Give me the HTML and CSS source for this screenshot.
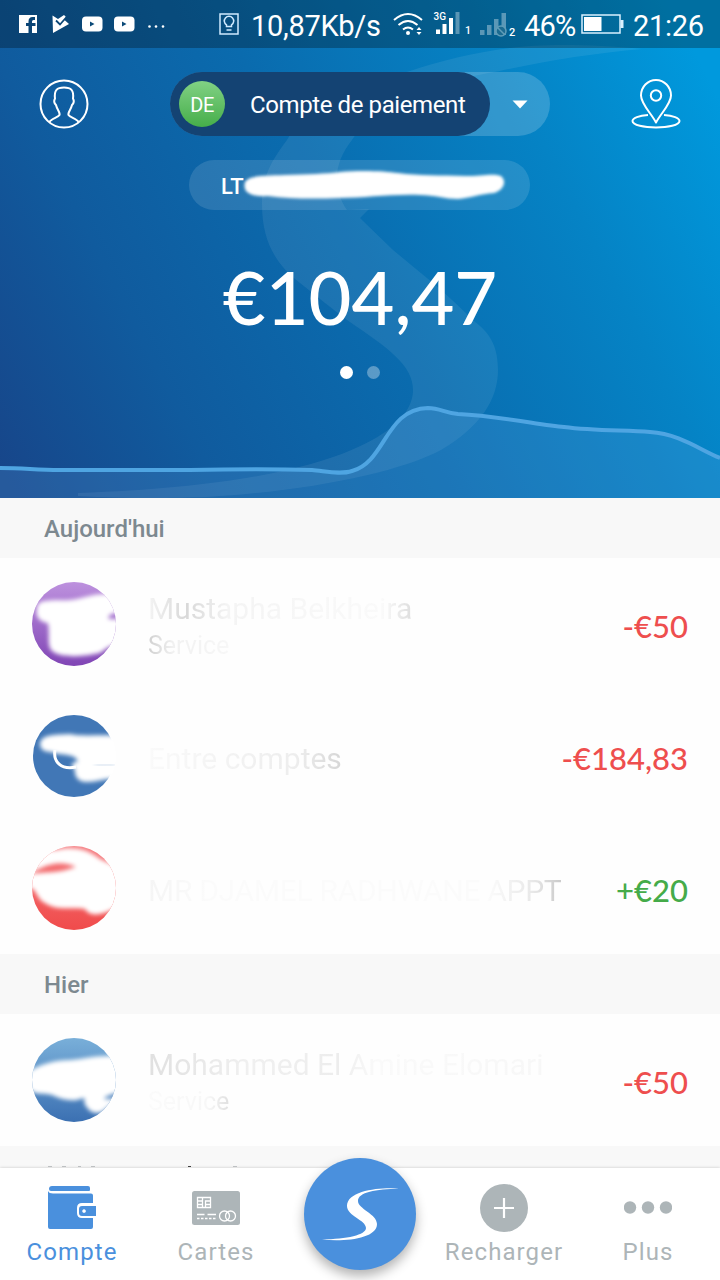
FILE: index.html
```html
<!DOCTYPE html>
<html lang="fr">
<head>
    <meta charset="UTF-8">
    <meta name="viewport" content="width=device-width, initial-scale=1.0">
    <title>Compte de paiement</title>
    <link rel="stylesheet" href="styles.css">
</head>
<body>

    <div class="header">
        <svg class="header-bg" viewBox="0 0 720 498">
            <defs>
                <linearGradient id="sky" gradientUnits="userSpaceOnUse" x1="0" y1="470" x2="720" y2="100">
                    <stop offset="0" stop-color="#17468a"/>
                    <stop offset=".23" stop-color="#105b9e"/>
                    <stop offset=".5" stop-color="#0a6bae"/>
                    <stop offset=".78" stop-color="#0583c5"/>
                    <stop offset="1" stop-color="#0099dd"/>
                </linearGradient>
            </defs>
            <rect width="720" height="498" fill="url(#sky)"/>
            <path fill="#fff" fill-opacity=".075" d="M643 49C590 44 540 44 510 48C475 52 440 61 410 71C340 92 300 116 287 140C268 165 262 180 262 205C262 240 275 264 300 283C315 295 330 307 347 320C388 348 413 365 413 390C413 433 330 485 78 493V496C130 499 175 498 207 497C310 491 400 472 441 450C480 427 498 400 498 370C498 340 485 330 473 320C460 307 445 293 433 283L393 250L360 218L369 209L347 210C330 185 336 160 352 140C380 95 440 82 500 71C545 61 595 53 643 49Z"/>
            <path fill="#64a9e8" fill-opacity=".2" d="M0 468C25 468 35 470 60 470H190C235 469 280 469 312 470C325 471 340 475 352 471C386 462 385 409 428 408C440 408 445 413 458 414C500 416 540 425 564 427C595 431 625 430 650 432C680 434 700 450 720 458V498H0Z"/>
            <path fill="none" stroke="#4fa5e2" stroke-width="4" d="M0 468C25 468 35 470 60 470H190C235 469 280 469 312 470C325 471 340 475 352 471C386 462 385 409 428 408C440 408 445 413 458 414C500 416 540 425 564 427C595 431 625 430 650 432C680 434 700 450 720 458"/>
        </svg>

        <div class="status-bar">
            <svg width="160" height="48" viewBox="0 0 160 48" fill="#fff">
                <path d="M19 15h18v18h-5v-7h3.500v-3H32v-1.500q0-1.500 1.500-1.500H35v-3h-2.500q-4 0-4 4.500v1.500H26v3h2.500v7H19z"/>
                <path d="M52.500 15.500l5.500 3.500 6-4 2 2-1.500 3 4.500 4-16 9z"/>
                <path d="M56 20.500l4 4 7-8" fill="none" stroke="#0c4777" stroke-width="1.800"/>
                <rect x="82" y="16.500" width="20.500" height="15" rx="4"/>
                <rect x="114" y="16.500" width="20.500" height="15" rx="4"/>
                <path fill="#0b4a78" d="M90 21.500l4.500 2.500-4.500 2.500zM122 21.500l4.500 2.500-4.500 2.500z"/>
                <circle cx="149.500" cy="26.500" r="1.300"/><circle cx="156" cy="26.500" r="1.300"/>
            </svg>
            <svg width="91" height="48" viewBox="160 0 91 48" fill="none" stroke="#cfeaff" stroke-width="1.500">
                <circle cx="163" cy="26.500" r="1.300" fill="#fff" stroke="none"/>
                <rect x="220" y="14" width="18" height="20"/>
                <path d="M226.500 26.500v-1.500a4.700 4.700 0 1 1 5 0v1.500zM226.500 30h5"/>
            </svg>
            <span class="status-text speed">10,87Kb/s</span>
            <svg class="signals" width="141" height="48" viewBox="383 0 141 48" fill="#fff">
                <g fill="none" stroke="#fff" stroke-width="2">
                    <path d="M394 20q14-12 28 0M398.500 25q9.500-8 19 0M403 29.500q5-4 10 0"/>
                </g>
                <circle cx="408" cy="33" r="2"/>
                <path d="M416.500 30l2.500-3 2.500 3zM416.500 32l2.500 3 2.500-3z"/>
                <text x="433.500" y="20" font-size="10">3G</text>
                <rect x="436" y="29.500" width="4" height="4.500"/><rect x="442.500" y="24" width="4" height="10"/><rect x="449" y="18" width="4" height="16"/>
                <rect x="455.500" y="12" width="4" height="22" opacity=".35"/>
                <text x="465" y="34" font-size="10.500">1</text>
                <g opacity=".35"><rect x="480" y="30" width="4.500" height="5"/><rect x="487" y="25" width="4.500" height="10"/><rect x="494" y="19" width="4.500" height="16"/><rect x="501.500" y="13" width="4.500" height="22"/></g>
                <circle cx="501" cy="31" r="5" fill="#1b6b91" stroke="#609db8" stroke-width="1.500"/><path d="M497.500 27.500l7 7" stroke="#609db8" stroke-width="1.500"/>
                <text x="509" y="35.500" font-size="11">2</text>
            </svg>
            <span class="status-text percent">46%</span>
            <svg class="battery" width="44" height="20" viewBox="0 0 44 20" fill="none" stroke="#d9f1ff" stroke-width="1.500">
                <rect x="1" y="1" width="38" height="18"/><path d="M39.500 6h3v8h-3z" fill="#d9f1ff" stroke="none"/><rect x="3" y="3" width="17.500" height="14" fill="#fff" stroke="none"/>
            </svg>
            <span class="status-text">21:26</span>
        </div>

        <div class="top-row">
            <svg width="50" height="50" viewBox="0 0 50 50" fill="none" stroke="#fff" stroke-width="2" stroke-linejoin="round">
                <circle cx="25" cy="25" r="23.500"/>
                <path d="M10.500 43C12 39.500 19 38.500 20.500 36C21.500 33.500 18 30.500 17 26Q14 23 16 19.500C15 11 18 8.500 25 8.500S35 11 34 19.500Q36 23 33 26C32 30.500 28.500 33.500 29.500 36C31 38.500 38 39.500 39.500 43"/>
            </svg>
            <div class="account-switch">
                <div class="account-current">
                    <div class="account-badge">DE</div>
                    <div class="account-name">Compte de paiement</div>
                </div>
                <svg width="16" height="9" viewBox="0 0 16 9"><path d="M.5.500h15L8 8.500z" fill="#fff"/></svg>
            </div>
            <svg width="50" height="50" viewBox="0 0 50 50" fill="none" stroke="#fff" stroke-width="2" stroke-linejoin="round">
                <path d="M25 43.500C20 34 10 25 10 16.500a15 15.500 0 0 1 30 0C40 25 30 34 25 43.500z"/>
                <circle cx="25" cy="16.500" r="5.200"/>
                <path d="M17 36C8 36.500 1.500 39 1.500 42C1.500 50.500 48.500 50.500 48.500 42C48.500 39 42 36.500 33 36"/>
            </svg>
        </div>

        <div class="iban">
            <span>LT</span>
            <svg width="270" height="44" viewBox="240 164 270 44">
                <defs><filter id="soft"><feGaussianBlur stdDeviation="1.500"/></filter></defs>
                <path filter="url(#soft)" fill="#fff" d="M245 183C251 175 270 177 285 176C310 175 325 175 340 173C360 171 385 172 398 174C420 177 440 176 465 177C482 177 493 174 501 177C507 182 504 191 494 194C480 195 470 199 458 200C445 200 435 196 420 196C390 195 365 199 340 199C315 200 290 200 268 197C252 198 242 194 245 183Z"/>
            </svg>
        </div>

        <div class="balance">€104,47</div>
        <div class="dots"><i class="dot active"></i><i class="dot"></i></div>
    </div>

    <div class="transactions">
        <h2 class="day">Aujourd'hui</h2>

        <div class="transaction">
            <svg class="avatar" viewBox="0 0 84 84">
                <defs>
                    <linearGradient id="purple" x2="0" y2="1"><stop stop-color="#bd91de"/><stop offset="1" stop-color="#8045b5"/></linearGradient>
                    <clipPath id="round"><circle cx="42" cy="42" r="42"/></clipPath>
                    <filter id="brush" x="-20%" y="-20%" width="140%" height="140%"><feGaussianBlur stdDeviation="2"/></filter>
                </defs>
                <g clip-path="url(#round)">
                    <rect width="84" height="84" fill="url(#purple)"/>
                    <path filter="url(#brush)" fill="#fff" d="M5 26C5 16 22 19 38 18C50 17 60 11 78 12L90 16V31C80 30 75 34 77 37H90V64C75 60 74 71 62 72C48 75 27 76 19 68C15 62 18 52 16 41C7 40 3 34 5 26Z"/>
                </g>
            </svg>
            <div class="details">
                <div class="name name-one">Mustapha Belkheira</div>
                <div class="type type-one">Service</div>
            </div>
            <div class="amount minus">-€50</div>
        </div>

        <div class="transaction">
            <svg class="avatar" viewBox="0 0 84 84">
                <g clip-path="url(#round)">
                    <circle cx="42" cy="42" r="41" fill="#4177b6"/>
                    <path filter="url(#brush)" fill="#fff" d="M8 30C9 20 23 21 38 20C52 23 69 20 90 22V65C76 63 67 68 55 68C45 68 42 61 43 55C36 52 42 47 46 48C44 39 30 42 19 38C12 38 8 35 8 30Z"/>
                    <path d="M23 36C21 48 29 56 44 53" fill="none" stroke="#fff" stroke-width="3"/>
                    <path filter="url(#brush)" d="M63 51L83 50.500" stroke="#a9c2de" stroke-width="1.500"/>
                </g>
            </svg>
            <div class="details">
                <div class="name name-two">Entre comptes</div>
            </div>
            <div class="amount minus">-€184,83</div>
        </div>

        <div class="transaction">
            <svg class="avatar" viewBox="0 0 84 84">
                <defs><linearGradient id="red" x2="0" y2="1"><stop stop-color="#f4787c"/><stop offset="1" stop-color="#f04b4b"/></linearGradient></defs>
                <g clip-path="url(#round)">
                    <rect width="84" height="84" fill="url(#red)"/>
                    <path filter="url(#brush)" fill="#fff" d="M-8 28V4H24C37 1 53 1 68 13L92 24V58L75 66C64 70 56 69 53 63C38 61 24 65 13 57C6 54 6 48 1 43L-8 40V28L8 27C25 26 32 25 44 21C33 16 22 16 9 22L0 26Z"/>
                </g>
            </svg>
            <div class="details">
                <div class="name name-three">MR DJAMEL RADHWANE APPT</div>
            </div>
            <div class="amount plus">+€20</div>
        </div>

        <h2 class="day">Hier</h2>

        <div class="transaction">
            <svg class="avatar" viewBox="0 0 84 84">
                <defs><linearGradient id="blue" x2="0" y2="1"><stop stop-color="#79afd9"/><stop offset="1" stop-color="#3b70b2"/></linearGradient></defs>
                <g clip-path="url(#round)">
                    <rect width="84" height="84" fill="url(#blue)"/>
                    <path filter="url(#brush)" fill="#fff" d="M-5 35C7 26 23 22 39 22C52 21 64 17 90 18V54C80 56 73 58 72 61H90L76 69C70 77 59 77 54 68C50 63 55 60 51 60C40 65 29 61 20 57C10 54 3 59-5 48Z"/>
                </g>
            </svg>
            <div class="details">
                <div class="name name-four">Mohammed El Amine Elomari</div>
                <div class="type type-two">Service</div>
            </div>
            <div class="amount minus">-€50</div>
        </div>

        <div class="day next-day">
            <svg width="240" height="3" viewBox="0 0 240 3" fill="#c4c7c9">
                <path d="M48 1h4v1h-4zM62 1h4v1h-4zM78 1h3v1h-3zM91 1h4v1h-4zM233 1h4v1h-4z"/><path d="M188 1h3v1h-3z" fill="#444"/>
            </svg>
        </div>
    </div>

    <div class="nav">
        <a class="nav-item active" href="#">
            <svg width="48" height="48" viewBox="0 0 48 48" fill="currentColor">
                <path d="M4 2h36q2 0 2 2v2q0 1-1 1H3Q1 7 1 5q0-3 3-3z"/>
                <path d="M0 7q1 2.500 5 2.500h38q2 0 2 2V19H34q-5 0-5 5v5q0 5 5 5h11v9q0 2-2 2H2q-2 0-2-2z"/>
                <path fill-rule="evenodd" d="M34 22h14v10H34q-3 0-3-3v-4q0-3 3-3zm2 3.200a1.800 1.800 0 1 0 .1 0z"/>
            </svg>
            <span>Compte</span>
        </a>
        <a class="nav-item" href="#">
            <svg width="48" height="48" viewBox="0 0 48 48">
                <rect y="7" width="48" height="34" rx="2.500" fill="currentColor"/>
                <g fill="none" stroke="#fff" stroke-width="1.300">
                    <path d="M5.500 13.500h13v10h-13zM5.500 17h5M5.500 20.500h5M10.500 13.500v10M13.500 23.500V17h5M13.500 20.500h5"/>
                    <path d="M5 30.500h7.500M15.500 30.500H24"/><path d="M5 34.500h19" stroke-dasharray="2.500 1.500"/>
                    <circle cx="32.500" cy="32" r="5"/><circle cx="38.500" cy="32" r="5"/>
                </g>
            </svg>
            <span>Cartes</span>
        </a>
        <a class="nav-main" href="#">
            <svg width="112" height="112" viewBox="0 0 112 112">
                <path fill="#fff" d="M95 30.500C77 29 43 32 43 48C43 58 62 62 62 70C62 77 43 81 18 81.500C40 84 73 81 73 66C73 56 54 51 54 43C54 34 72 31.500 95 30.500Z"/>
            </svg>
        </a>
        <a class="nav-item" href="#">
            <svg width="48" height="48" viewBox="0 0 48 48">
                <circle cx="24" cy="24" r="24" fill="currentColor"/><path d="M24 14v20M14 24h20" stroke="#fff" stroke-width="2.200"/>
            </svg>
            <span>Recharger</span>
        </a>
        <a class="nav-item" href="#">
            <svg width="48" height="48" viewBox="0 0 48 48" fill="currentColor"><circle cx="6" cy="23.500" r="6.200"/><circle cx="24" cy="23.500" r="6.200"/><circle cx="42" cy="23.500" r="6.200"/></svg>
            <span>Plus</span>
        </a>
    </div>

</body>
</html>
```
FILE: styles.css
```css
* {
    box-sizing: border-box;
}
body {
    margin: 0;
    width: 720px;
    height: 1280px;
    display: flex;
    flex-direction: column;
    overflow: hidden;
    font-family: Roboto, sans-serif;
    background-color: #fefefe;
}
svg {
    display: block;
    flex-shrink: 0;
}
.header {
    position: relative;
    height: 498px;
    flex-shrink: 0;
    display: flex;
    flex-direction: column;
    align-items: center;
    color: #fff;
}
.header-bg {
    position: absolute;
    left: 0;
    top: 0;
    width: 720px;
    height: 498px;
    z-index: -1;
}
.status-bar {
    width: 720px;
    height: 48px;
    display: flex;
    align-items: center;
    background-color: rgba(0, 0, 0, 0.27);
    flex-shrink: 0;
}
.status-text {
    font-size: 29px;
    line-height: 48px;
    padding-top: 3px;
    white-space: nowrap;
    letter-spacing: -0.3px;
}
.speed {
    width: 132px;
}
.percent {
    width: 57px;
    letter-spacing: -0.8px;
}
.battery {
    margin-right: 8px;
}
.signals {
    font-weight: 500;
}
.top-row {
    width: 720px;
    height: 64px;
    margin-top: 24px;
    padding: 0 39px;
    display: flex;
    justify-content: space-between;
    align-items: center;
}
.account-switch {
    width: 380px;
    height: 64px;
    border-radius: 32px;
    background-color: rgba(255, 255, 255, 0.18);
    display: flex;
    align-items: center;
    gap: 22px;
}
.account-current {
    width: 320px;
    height: 64px;
    border-radius: 32px;
    background-color: #144373;
    display: flex;
    align-items: center;
    padding-left: 9px;
    gap: 25px;
}
.account-badge {
    width: 46px;
    height: 46px;
    border-radius: 50%;
    background: linear-gradient(#81d184, #46ae4a);
    font-size: 20px;
    line-height: 48px;
    letter-spacing: -0.5px;
    text-align: center;
}
.account-name {
    font-size: 24px;
    white-space: nowrap;
    letter-spacing: -0.4px;
    padding-top: 2px;
}
.iban {
    width: 341px;
    height: 50px;
    margin-top: 24px;
    margin-right: 1px;
    padding-left: 32px;
    border-radius: 25px;
    background-color: rgba(255, 255, 255, 0.12);
    display: flex;
    align-items: center;
    font-size: 22px;
    font-weight: 500;
}
.iban span {
    width: 19px;
    padding-top: 2px;
}
.balance {
    margin-top: 42px;
    margin-bottom: 3px;
    height: 90px;
    line-height: 90px;
    font-family: Lato, sans-serif;
    font-weight: 500;
    font-size: 74px;
}
.dots {
    display: flex;
    gap: 14px;
    margin-top: 21px;
}
.dot {
    width: 13px;
    height: 13px;
    border-radius: 50%;
    background-color: rgba(255, 255, 255, 0.33);
}
.dot.active {
    background-color: #fff;
}
.transactions {
    flex: 1;
    min-height: 0;
    overflow: hidden;
}
.day {
    margin: 0;
    height: 60px;
    padding: 1px 44px 0;
    line-height: 60px;
    font-size: 24px;
    font-weight: 500;
    color: #7d8990;
    background-color: #f8f8f8;
}
.next-day {
    padding: 19px 0 0;
}
.transaction {
    height: 132px;
    padding: 0 32px;
    display: flex;
    align-items: center;
}
.avatar {
    width: 84px;
    height: 84px;
}
.details {
    margin-left: 32px;
    padding-top: 5px;
    flex: 1;
    min-width: 0;
    white-space: nowrap;
}
.name,
.type {
    color: transparent;
    background-clip: text;
    -webkit-background-clip: text;
}
.name {
    width: 420px;
    font-size: 30px;
    line-height: 38px;
}
.type {
    width: 100px;
    font-size: 25px;
    line-height: 36px;
}
.name-one {
    background-image: linear-gradient(90deg, #f4f4f4 0, #d8d8d8 38px, #f4f4f4 80px, #fafafa 235px, #dddddd 265px);
}
.name-two {
    background-image: linear-gradient(90deg, #fafafa 0, #f3f3f3 80px, #ededed 150px, #d6d6d6 194px);
}
.name-three {
    letter-spacing: -0.3px;
    background-image: linear-gradient(90deg, #f5f5f5 0, #fbfbfb 60px, #fbfbfb 340px, #e8e8e8 385px, #c8c8c8 415px);
}
.name-four {
    background-image: linear-gradient(90deg, #e0e0e0 0, #f0f0f0 100px, #ededed 190px, #fafafa 230px, #f7f7f7 400px);
}
.type-one {
    background-image: linear-gradient(90deg, #d0d0d0 0, #f1f1f1 25px, #f7f7f7 80px);
}
.type-two {
    background-image: linear-gradient(90deg, #fbfbfb 0, #f7f7f7 60px, #dddddd 84px);
}
.amount {
    font-family: Lato, sans-serif;
    font-size: 31px;
    font-weight: 500;
    padding-top: 3px;
    white-space: nowrap;
    flex-shrink: 0;
}
.minus {
    color: #ee4e4e;
}
.plus {
    color: #45ab49;
}
.nav {
    height: 112px;
    flex-shrink: 0;
    display: grid;
    grid-template-columns: repeat(5, 144px);
    justify-items: center;
    background-color: #fff;
    box-shadow: 0 0 3px rgba(0, 0, 0, 0.2);
}
.nav-item {
    display: flex;
    flex-direction: column;
    align-items: center;
    padding-top: 16px;
    gap: 6px;
    color: #adb5b8;
    font-size: 24px;
    line-height: 28px;
    letter-spacing: 1.1px;
    text-decoration: none;
}
.nav-item.active {
    color: #4a90dd;
}
.nav-main {
    width: 112px;
    height: 112px;
    margin-top: -10px;
    border-radius: 50%;
    background-color: #4a90dd;
    box-shadow: 0 6px 12px rgba(0, 0, 0, 0.3);
}
```
